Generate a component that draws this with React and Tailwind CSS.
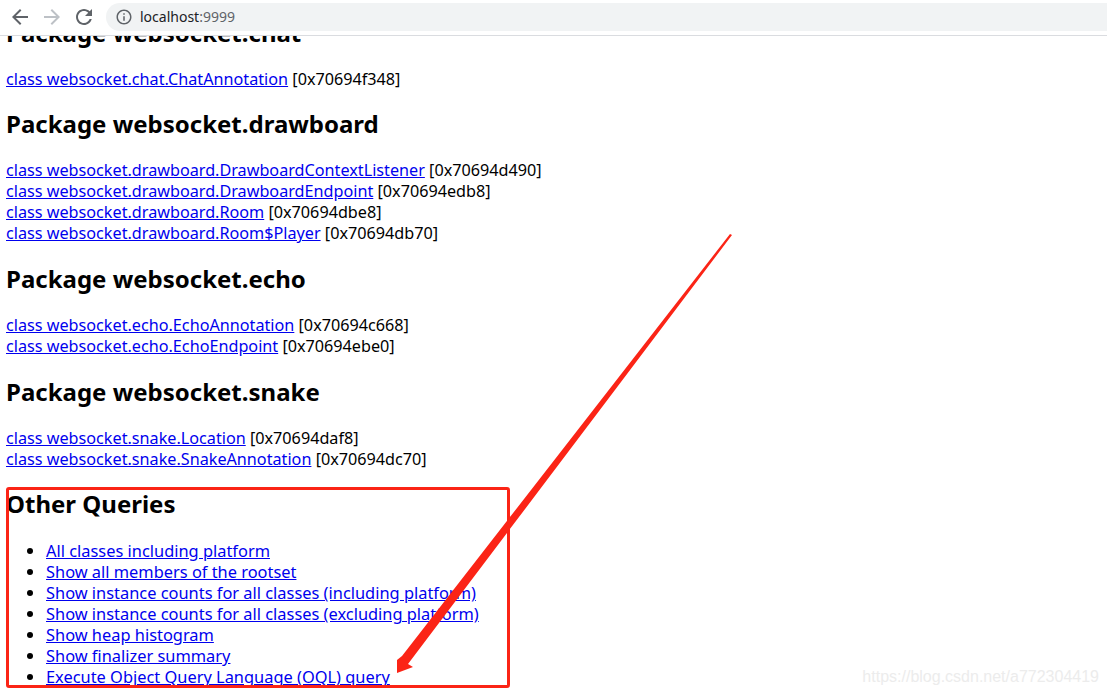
const FONT = "font-['Noto_Sans','Open_Sans',sans-serif]";

const sections = [
  {
    title: "Package websocket.chat",
    rows: [["class websocket.chat.ChatAnnotation", "[0x70694f348]"]],
  },
  {
    title: "Package websocket.drawboard",
    rows: [
      ["class websocket.drawboard.DrawboardContextListener", "[0x70694d490]"],
      ["class websocket.drawboard.DrawboardEndpoint", "[0x70694edb8]"],
      ["class websocket.drawboard.Room", "[0x70694dbe8]"],
      ["class websocket.drawboard.Room$Player", "[0x70694db70]"],
    ],
  },
  {
    title: "Package websocket.echo",
    rows: [
      ["class websocket.echo.EchoAnnotation", "[0x70694c668]"],
      ["class websocket.echo.EchoEndpoint", "[0x70694ebe0]"],
    ],
  },
  {
    title: "Package websocket.snake",
    rows: [
      ["class websocket.snake.Location", "[0x70694daf8]"],
      ["class websocket.snake.SnakeAnnotation", "[0x70694dc70]"],
    ],
  },
];

const queries = [
  "All classes including platform",
  "Show all members of the rootset",
  "Show instance counts for all classes (including platform)",
  "Show instance counts for all classes (excluding platform)",
  "Show heap histogram",
  "Show finalizer summary",
  "Execute Object Query Language (OQL) query",
];

function ToolIcon({ d, className }) {
  return (
    <svg viewBox="0 0 24 24" className={className} fill="currentColor">
      <path d={d} />
    </svg>
  );
}

function Toolbar() {
  return (
    <div className="flex h-[36px] shrink-0 items-start border-b border-[#dadce0] bg-white pt-[3px] pl-[8px]">
      <ToolIcon className="mt-[2px] h-[24px] w-[24px] text-[#5f6368]" d="M20 11H7.83l5.59-5.59L12 4l-8 8 8 8 1.41-1.41L7.83 13H20v-2z" />
      <ToolIcon className="mt-[2px] ml-[8px] h-[24px] w-[24px] text-[#bdc1c6]" d="M12 4l-1.41 1.41L16.17 11H4v2h12.17l-5.58 5.59L12 20l8-8z" />
      <ToolIcon className="mt-[2px] ml-[8px] h-[24px] w-[24px] text-[#5f6368]" d="M17.65 6.35C16.2 4.9 14.21 4 12 4c-4.42 0-7.99 3.58-7.99 8s3.57 8 7.99 8c3.73 0 6.84-2.55 7.73-6h-2.08c-.82 2.33-3.04 4-5.65 4-3.31 0-6-2.69-6-6s2.69-6 6-6c1.66 0 3.14.69 4.22 1.78L13 11h7V4l-2.35 2.35z" />
      <div className="ml-[10px] flex h-[28px] flex-1 items-center rounded-l-full bg-[#f1f3f4] pl-[9px]">
        <ToolIcon className="h-[18px] w-[18px] text-[#5f6368]" d="M11 7h2v2h-2zm0 4h2v6h-2zm1-9C6.48 2 2 6.48 2 12s4.48 10 10 10 10-4.48 10-10S17.52 2 12 2zm0 18c-4.41 0-8-3.59-8-8s3.59-8 8-8 8 3.59 8 8-3.59 8-8 8z" />
        <span className="ml-[7px] text-[14px] leading-[24px] text-[#5f6368]">
          <span className="text-[#202124]">localhost</span>:9999
        </span>
      </div>
    </div>
  );
}

function Section({ title, rows }) {
  return (
    <section>
      <h2 className="mt-[18.7px] mb-[20px] text-[24px] leading-[32px] font-bold text-black">{title}</h2>
      {rows.map(([name, addr]) => (
        <div key={name} className="text-[16.2px] leading-[21px] whitespace-nowrap text-black">
          <a href="#" className="text-[#0000ee] underline">{name}</a> {addr}
        </div>
      ))}
    </section>
  );
}

export default function App() {
  return (
    <div className={`relative flex h-[694px] w-[1107px] flex-col overflow-hidden bg-white ${FONT}`}>
      <Toolbar />
      <main className="min-h-0 flex-1 overflow-hidden pl-[6px]">
        <div className="-mt-[38px]">
          {sections.map((s) => (
            <Section key={s.title} {...s} />
          ))}
          <h2 className="mt-[18.7px] mb-[20px] text-[24px] leading-[32px] font-bold text-black">Other Queries</h2>
          <ul className="list-disc pl-[40px] text-[16.4px] leading-[21px]">
            {queries.map((q) => (
              <li key={q}>
                <a href="#" className="text-[#0000ee] underline">{q}</a>
              </li>
            ))}
          </ul>
        </div>
      </main>

      {/* annotation drawn over the page */}
      <div className="absolute top-[487px] left-[6px] h-[201px] w-[504px] rounded-[3px] border-[3px] border-[#fb2416]" />
      <svg className="absolute inset-0" width="1107" height="694" viewBox="0 0 1107 694">
        <polygon fill="#fb2416" points="730,234 732,235 408,664 413,667 397,673 397,660 402,656" />
      </svg>
      <span className="absolute top-[665px] right-[8px] font-['Liberation_Sans',sans-serif] text-[16px] text-[#ececec]">
        https://blog.csdn.net/a772304419
      </span>
    </div>
  );
}
